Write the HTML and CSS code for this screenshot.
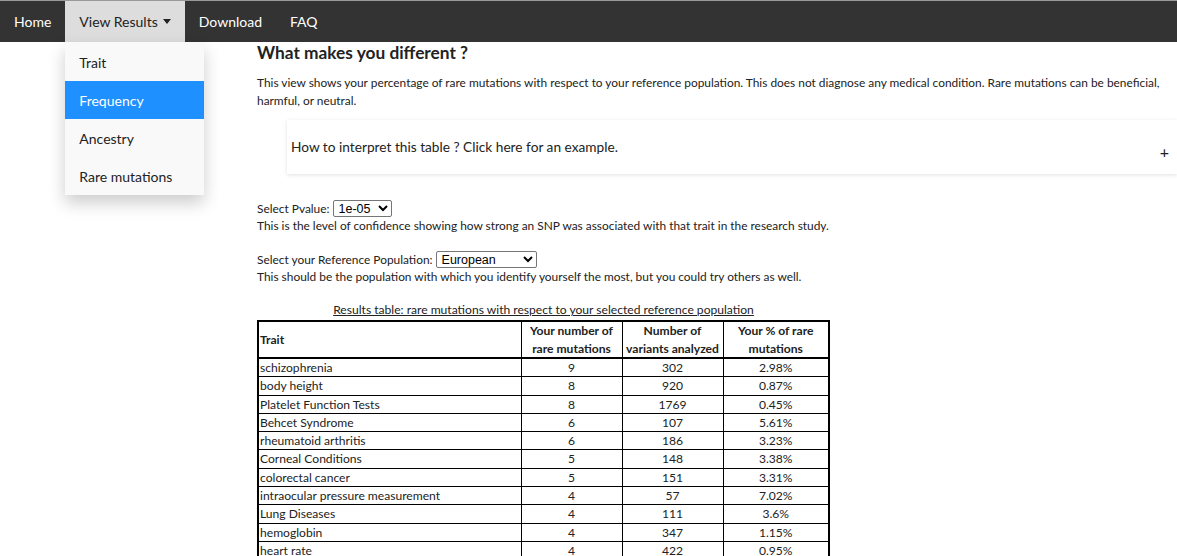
FILE: index.html
```html
<!DOCTYPE html>
<html>
<head>
<meta charset="utf-8">
<link rel="stylesheet" href="styles.css">
</head>
<body>
<nav class="topnav">
  <a class="nav-item">Home</a>
  <div class="nav-drop">
    <a class="nav-item active">View Results <span class="caret"></span></a>
    <div class="drop-menu">
      <a class="drop-item">Trait</a>
      <a class="drop-item selected">Frequency</a>
      <a class="drop-item">Ancestry</a>
      <a class="drop-item">Rare mutations</a>
    </div>
  </div>
  <a class="nav-item">Download</a>
  <a class="nav-item">FAQ</a>
</nav>
<main class="content">
  <h2 class="title">What makes you different ?</h2>
  <p class="intro">This view shows your percentage of rare mutations with respect to your reference population. This does not diagnose any medical condition. Rare mutations can be beneficial, harmful, or neutral.</p>
  <div class="collapsible">
    <span class="coll-text">How to interpret this table ? Click here for an example.</span>
    <span class="coll-plus">+</span>
  </div>
  <div class="field">
    <div class="field-row">Select Pvalue:&nbsp;<select class="sel sel-p"><option>1e-05</option></select></div>
    <div>This is the level of confidence showing how strong an SNP was associated with that trait in the research study.</div>
  </div>
  <div class="field">
    <div class="field-row">Select your Reference Population:&nbsp;<select class="sel sel-r"><option>European</option></select></div>
    <div>This should be the population with which you identify yourself the most, but you could try others as well.</div>
  </div>
  <table class="results">
    <caption>Results table: rare mutations with respect to your selected reference population</caption>
    <thead>
      <tr><th class="c-trait">Trait</th><th class="c-num">Your number of rare mutations</th><th class="c-var">Number of variants analyzed</th><th class="c-pct">Your % of rare mutations</th></tr>
    </thead>
    <tbody>
      <tr><td>schizophrenia</td><td>9</td><td>302</td><td>2.98%</td></tr>
      <tr><td>body height</td><td>8</td><td>920</td><td>0.87%</td></tr>
      <tr><td>Platelet Function Tests</td><td>8</td><td>1769</td><td>0.45%</td></tr>
      <tr><td>Behcet Syndrome</td><td>6</td><td>107</td><td>5.61%</td></tr>
      <tr><td>rheumatoid arthritis</td><td>6</td><td>186</td><td>3.23%</td></tr>
      <tr><td>Corneal Conditions</td><td>5</td><td>148</td><td>3.38%</td></tr>
      <tr><td>colorectal cancer</td><td>5</td><td>151</td><td>3.31%</td></tr>
      <tr><td>intraocular pressure measurement</td><td>4</td><td>57</td><td>7.02%</td></tr>
      <tr><td>Lung Diseases</td><td>4</td><td>111</td><td>3.6%</td></tr>
      <tr><td>hemoglobin</td><td>4</td><td>347</td><td>1.15%</td></tr>
      <tr><td>heart rate</td><td>4</td><td>422</td><td>0.95%</td></tr>
    </tbody>
  </table>
</main>
</body>
</html>
```

FILE: styles.css
```css
* { box-sizing: border-box; }
html, body { margin: 0; padding: 0; }
body {
  font-family: Lato, "Open Sans", sans-serif;
  color: #222;
  background: #fff;
  font-size: 11.9px;
  overflow: hidden;
}
.topnav {
  display: flex;
  height: 42px;
  background: #333;
  border-top: 1px solid #9a9a9a;
}
.nav-item {
  display: flex;
  align-items: center;
  height: 41px;
  padding: 0 14px;
  color: #fff;
  font-size: 14px;
  text-decoration: none;
}
.nav-item.active {
  background: #ddd;
  color: #222;
}
.caret {
  display: inline-block;
  width: 0; height: 0;
  margin-left: 5px;
  border-left: 4px solid transparent;
  border-right: 4px solid transparent;
  border-top: 5px solid #222;
}
.nav-drop { position: relative; }
.drop-menu {
  position: absolute;
  left: 0;
  top: 41px;
  width: 139px;
  background: #f9f9f9;
  box-shadow: 0 8px 16px rgba(0,0,0,0.2);
  z-index: 5;
  display: flex;
  flex-direction: column;
  padding-top: 1px;
}
.drop-item {
  display: flex;
  align-items: center;
  height: 38px;
  padding: 0 14px;
  font-size: 14px;
  color: #222;
}
.drop-item.selected {
  background: #1e90ff;
  color: #fff;
}
.content {
  padding-left: 257px;
}
.title {
  margin: 0;
  padding-top: 0;
  font-size: 17.3px;
  font-weight: 700;
  line-height: 21px;
  color: #222;
}
.intro {
  margin: 11px 0 0;
  line-height: 18px;
  padding-right: 0;
}
.collapsible {
  margin: 10px 0 0 30px;
  height: 54px;
  display: flex;
  align-items: center;
  justify-content: space-between;
  padding: 0 8px 0 4px;
  box-shadow: 0 1px 4px rgba(0,0,0,0.12);
}
.coll-text { font-size: 13.7px; color: #222; margin-top: -2px; }
.coll-plus { font-size: 16px; color: #222; margin-top: 9px; }
.field {
  margin-top: 26px;
  line-height: 17px;
}
.field + .field { margin-top: 17px; }
.field-row {
  display: flex;
  align-items: center;
  height: 17px;
}
.sel {
  font-family: "Liberation Sans", Arial, sans-serif;
  font-size: 12.5px;
  height: 17px;
  padding: 0 1px;
  border: 1px solid #767676;
  border-radius: 2px;
  background: #fff;
  color: #000;
}
.sel-p { width: 59px; }
.sel-r { width: 101px; }
.results {
  margin-top: 16px;
  border-collapse: collapse;
  border: 2px solid #000;
  font-size: 12.1px;
}
.results caption {
  text-decoration: underline;
  line-height: 17px;
  padding-bottom: 2px;
}
.results th {
  font-weight: 700;
  line-height: 17.5px;
  border: 1px solid #000;
  border-bottom: 2px solid #000;
  padding: 0 2px;
  text-align: center;
}
.results th.c-trait { text-align: left; padding-left: 1px; }
.c-trait { width: 263px; }
.c-num { width: 101px; }
.c-var { width: 101px; }
.c-pct { width: 106px; }
.results td {
  border: 1px solid #000;
  line-height: 17.3px;
  padding: 0 2px;
  text-align: center;
}
.results td:first-child { text-align: left; padding-left: 1px; }
```
